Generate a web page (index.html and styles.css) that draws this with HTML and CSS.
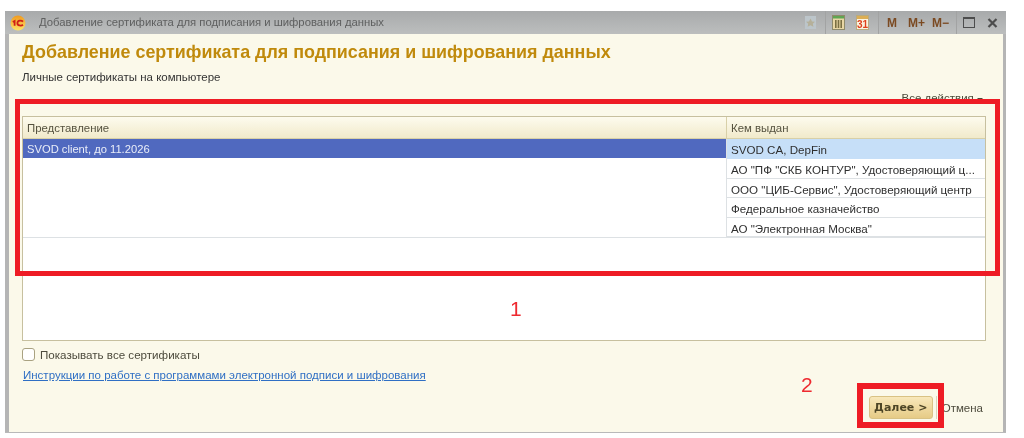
FILE: index.html
```html
<!DOCTYPE html>
<html lang="ru">
<head>
<meta charset="utf-8">
<title>Добавление сертификата</title>
<link rel="stylesheet" href="styles.css">
</head>
<body>
<div class="shot">
  <div class="window">
    <header class="titlebar">
      <svg class="logo" width="16" height="16" viewBox="0 0 16 16">
        <defs>
          <linearGradient id="logoFill" x1="0" y1="0" x2="0" y2="1">
            <stop offset="0" stop-color="#f09a1e"/>
            <stop offset="1" stop-color="#fde26a"/>
          </linearGradient>
        </defs>
        <circle cx="8" cy="8" r="7.500" fill="url(#logoFill)"/>
        <path d="M2.800 7 4.600 6V10.800" fill="none" stroke="#cf1f17" stroke-width="1.800"/>
        <path d="M13 6.600C11.600 5.200 7.600 5.200 7.400 8c-.2 2.800 4 3 5.600 1.800" fill="none" stroke="#cf1f17" stroke-width="1.800"/>
      </svg>
      <span class="wintitle">Добавление сертификата для подписания и шифрования данных</span>
      <div class="tools">
        <svg class="tool" width="11" height="13" viewBox="0 0 11 13">
          <rect width="11" height="13" fill="#bcc5ca"/>
          <path d="M5.500 2.500 7 5.500l3 .3-2.200 2 .6 3-2.900-1.500-2.900 1.500.6-3-2.200-2 3-.3z" fill="#b5b09a"/>
        </svg>
        <i class="sep"></i>
        <svg class="tool" width="13" height="15" viewBox="0 0 13 15">
          <rect x=".5" y=".5" width="12" height="14" fill="#e8d6a4" stroke="#8f8a6a"/>
          <rect x="1" y="1" width="11" height="2.500" fill="#5fa552"/>
          <path d="M3 5h1.600v8H3zM5.700 5h1.600v8H5.700zM8.400 5h1.600v8H8.400z" fill="#7a6f42"/>
        </svg>
        <svg class="tool cal" width="13" height="15" viewBox="0 0 13 15">
          <rect x=".5" y=".5" width="12" height="14" fill="#fbf3e0" stroke="#b8ab80"/>
          <rect x="1" y="1" width="11" height="3" fill="#dcae55"/>
          <text x="6.500" y="13.200" class="caltext">31</text>
        </svg>
        <i class="sep sep-b"></i>
        <span class="mem m1">M</span>
        <span class="mem m2">M+</span>
        <span class="mem m3">M−</span>
        <i class="sep sep-c"></i>
        <span class="winbox"></span>
        <svg class="close" width="11" height="10" viewBox="0 0 11 10">
          <path d="M1.500 1 9.500 9M9.500 1 1.500 9" stroke="#4d4d4d" stroke-width="2.200"/>
        </svg>
      </div>
    </header>
    <main class="content">
      <h1 class="heading">Добавление сертификата для подписания и шифрования данных</h1>
      <p class="sub">Личные сертификаты на компьютере</p>
      <div class="actions">Все действия <span class="caret"></span></div>
      <section class="grid">
        <div class="ghead">
          <div class="gh-a">Представление</div>
          <div class="gh-b">Кем выдан</div>
        </div>
        <div class="gbody">
          <div class="col-a"><div class="sel">SVOD client, до 11.2026</div></div>
          <div class="col-b">
            <div class="cell cell-sel">SVOD CA, DepFin</div>
            <div class="cell">АО "ПФ "СКБ КОНТУР", Удостоверяющий ц...</div>
            <div class="cell">ООО "ЦИБ-Сервис", Удостоверяющий центр</div>
            <div class="cell">Федеральное казначейство</div>
            <div class="cell">АО "Электронная Москва"</div>
          </div>
        </div>
      </section>
      <label class="check"><span class="box"></span>Показывать все сертификаты</label>
      <a class="link" href="#">Инструкции по работе с программами электронной подписи и шифрования</a>
      <footer class="foot">
        <button class="next" type="button">Далее &gt;</button>
        <i class="foot-sep"></i>
        <span class="cancel">Отмена</span>
      </footer>
    </main>
  </div>
  <div class="mark mark-1"></div>
  <div class="mark mark-2"></div>
  <span class="num num-1">1</span>
  <span class="num num-2">2</span>
</div>
</body>
</html>
```
FILE: styles.css
```css
* { box-sizing: border-box; }
html, body { margin: 0; background: #fff; }
body { width: 1024px; height: 438px; overflow: hidden; font-family: "Liberation Sans", Arial, sans-serif; }
.shot { position: relative; width: 1024px; height: 438px; padding: 11px 18px 0 5px; filter: blur(0.45px); }
.window { width: 1001px; height: 422px; display: flex; flex-direction: column; background: #b5b5b5; border-bottom: 1px solid #b9b9b9; }
.titlebar { height: 23px; flex: none; display: flex; align-items: center; padding-left: 5px; background: linear-gradient(#a8aaab, #bcbebe); }
.logo { flex: none; }
.wintitle { margin-left: 13px; font-size: 11.3px; line-height: 13px; color: #5f6060; white-space: nowrap; }
.tools { margin-left: auto; display: flex; align-items: center; height: 23px; padding-right: 8px; }
.tool { flex: none; }
.sep { width: 1px; height: 23px; margin: 0 6px 0 9px; background: #a2a3a3; }
.cal { margin-left: 11px; }
.caltext { font: bold 10px "Liberation Sans", sans-serif; fill: #e0401c; text-anchor: middle; }
.sep-b { margin: 0 8px 0 9px; }
.sep-c { margin: 0 6px 0 7px; }
.mem { font-size: 12px; font-weight: bold; color: #7b4a22; white-space: nowrap; }
.m2 { margin-left: 11px; }
.m3 { margin-left: 7px; }
.winbox { width: 12px; height: 11px; border: 1px solid #4d4d4d; border-top-width: 2px; margin-right: 12px; }
.close { flex: none; }
.content { position: relative; flex: 1; margin: 0 3px 0 4px; padding: 0 17px 0 13px; background: #fbf9ea; display: flex; flex-direction: column; }
.heading { margin: 9px 0 0; font-size: 17.9px; line-height: 18px; font-weight: bold; color: #c08a0c; white-space: nowrap; }
.sub { margin: 10px 0 0; font-size: 11.5px; line-height: 12px; color: #333; }
.actions { margin: 9px 3px 0 0; align-self: flex-end; font-size: 11.5px; line-height: 12px; color: #4a4a3a; white-space: nowrap; }
.caret { display: inline-block; border: 3px solid transparent; border-top: 3px solid #4a4a3a; border-bottom: 0; vertical-align: 1px; }
.grid { margin-top: 12px; height: 225px; background: #fff; border: 1px solid #c7c09f; display: flex; flex-direction: column; }
.ghead { flex: none; height: 22px; display: flex; background: linear-gradient(#fdfbee, #f1eacb); border-bottom: 1px solid #d8d0a8; font-size: 11.4px; color: #55523f; }
.gh-a { width: 703px; padding: 5px 0 0 4px; }
.gh-b { flex: 1; padding: 5px 0 0 4px; border-left: 1px solid #d8d0a8; }
.gbody { flex: none; height: 99px; display: flex; border-bottom: 1px solid #dde1e4; }
.col-a { width: 703px; }
.sel { height: 19px; padding: 4px 0 0 4px; background: #5069bf; color: #e9edf8; font-size: 11.2px; line-height: 13px; }
.col-b { flex: 1; border-left: 1px solid #dde1e4; display: flex; flex-direction: column; }
.cell { height: 19.5px; padding: 4px 0 0 4px; font-size: 11.6px; line-height: 14px; color: #2f2f2f; white-space: nowrap; border-bottom: 1px solid #dde1e4; }
.cell-sel { height: 20px; background: #c6dff8; border-bottom: 0; }
.check { margin-top: 6px; display: flex; align-items: center; height: 15px; font-size: 11.6px; color: #4d4b3d; }
.box { width: 13px; height: 13px; margin-right: 5px; border: 1px solid #a9a281; border-radius: 3px; background: #fff; }
.link { margin: 7px 0 0 1px; align-self: flex-start; font-size: 11.5px; line-height: 13px; color: #2f6fc4; white-space: nowrap; }
.foot { position: absolute; right: 20px; bottom: 13px; display: flex; align-items: center; }
.next { width: 64px; height: 23px; padding: 0; border: 1px solid #d9c284; border-radius: 3px; background: linear-gradient(#f8e8bb, #e6cb86); font: bold 11px "DejaVu Sans", sans-serif; color: #4d4526; }
.foot-sep { width: 1px; height: 23px; margin: 0 5px 0 3px; background: #d8d4bc; }
.cancel { font-size: 11.5px; color: #4d4b3d; }
.mark { position: absolute; border: 5px solid #ee1c25; }
.mark-1 { left: 15px; top: 99px; width: 985px; height: 177px; }
.mark-2 { left: 857px; top: 383px; width: 87px; height: 45px; border-width: 6px; }
.num { position: absolute; font-size: 21px; line-height: 24px; color: #ee2a30; }
.num-1 { left: 510px; top: 297px; }
.num-2 { left: 801px; top: 373px; }
```
